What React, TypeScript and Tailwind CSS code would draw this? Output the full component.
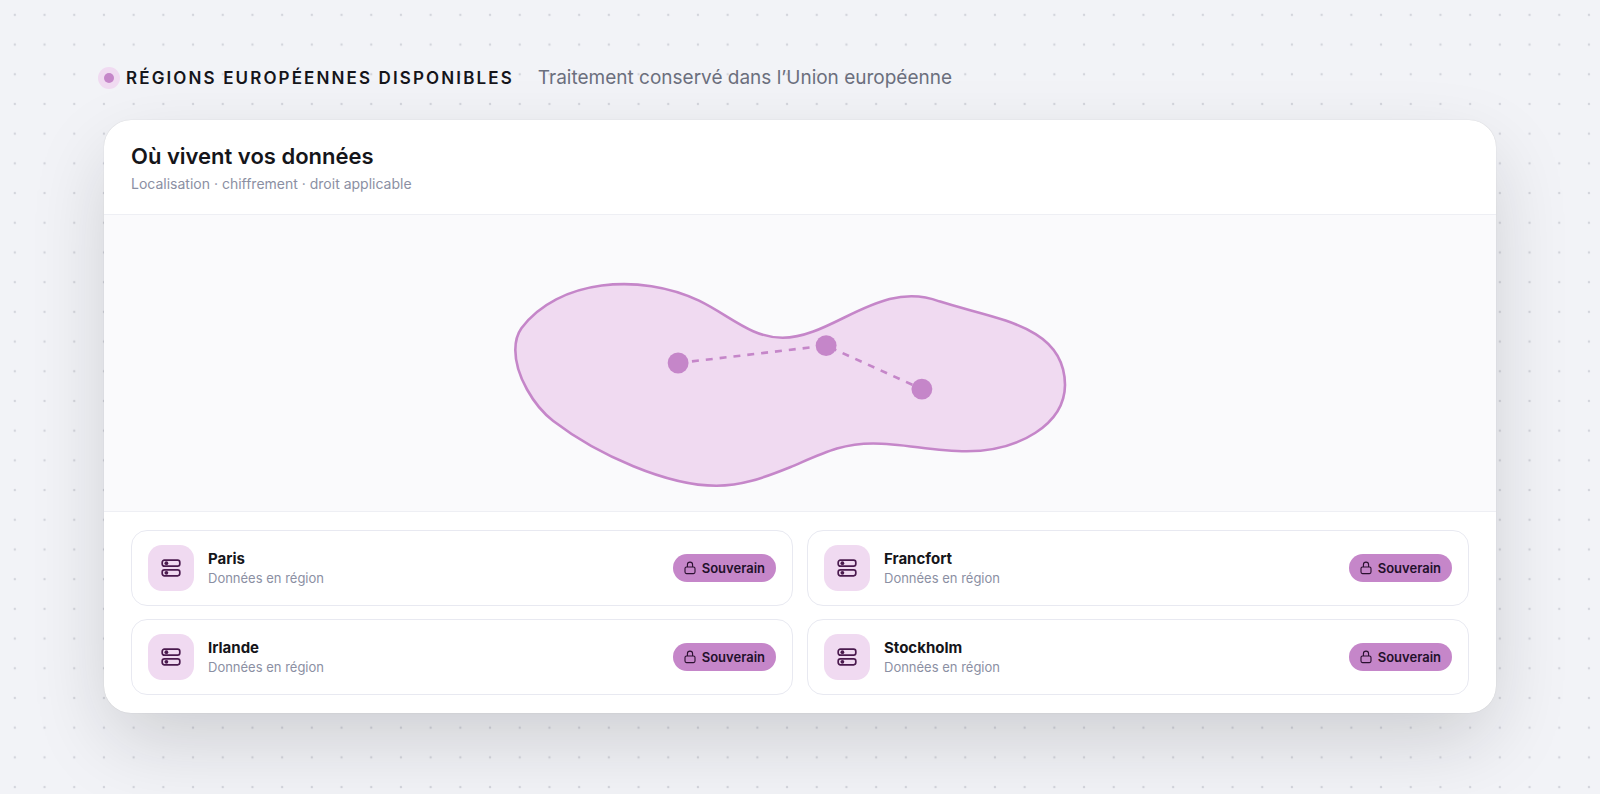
const regions = [
  { id: "paris", name: "Paris" },
  { id: "francfort", name: "Francfort" },
  { id: "irlande", name: "Irlande" },
  { id: "stockholm", name: "Stockholm" },
];

const DotGrid = () => (
  <svg className="absolute inset-0 h-full w-full" aria-hidden="true">
    <defs>
      <pattern id="dots" width="22" height="22" patternUnits="userSpaceOnUse" patternTransform="scale(1.35)">
        <circle cx="11" cy="11" r="0.9" fill="#d3d5dc" />
      </pattern>
    </defs>
    <rect width="100%" height="100%" fill="url(#dots)" />
  </svg>
);

const ServerIcon = () => (
  <svg width="20" height="18" viewBox="0 0 20 18" fill="none" stroke="#4a1a4e" strokeWidth="1.7" aria-hidden="true">
    <rect x="1.2" y="1.2" width="17.6" height="6" rx="2.2" />
    <rect x="1.2" y="10.8" width="17.6" height="6" rx="2.2" />
    <circle cx="5.4" cy="4.2" r="1.9" fill="#4a1a4e" stroke="none" />
    <circle cx="5.4" cy="13.8" r="1.9" fill="#4a1a4e" stroke="none" />
  </svg>
);

const LockIcon = () => (
  <svg width="12" height="14" viewBox="0 0 12 14" fill="none" stroke="#2a1030" strokeWidth="1.1" aria-hidden="true">
    <rect x="1" y="6" width="10" height="6.6" rx="1.5" />
    <path d="M3.4 6V3.7a2.6 2.6 0 0 1 5.2 0V6" />
  </svg>
);

const RegionMap = () => (
  <svg className="block h-74 w-full" viewBox="0 0 400 170" fill="none" role="img" aria-label="Régions européennes">
    <path
      d="M40 65C61 37 108 33 142 49.2C160 58 172 70.5 190 70.5C219 70.5 246 36.5 280 49.6C312 60 352 63 352.2 97.6C352 120 326 135.7 295.7 135.7C276 135.7 260 131.2 242 131.2C224 131.2 214 136.5 194.3 144.9C178 151.5 166 155.5 152 155.5C124 155.5 84 138 58.3 118.3C47 109.6 36.5 92 36.5 77.5C36.5 72 37.5 68.5 40 65Z"
      fill="#f0daf1"
      stroke="#c586c9"
      strokeWidth="1.5"
    />
    <path d="M130 85L215 75L270 100" stroke="#c586c9" strokeWidth="1.5" strokeDasharray="4 4" />
    <circle cx="130" cy="85" r="6" fill="#c586c9" />
    <circle cx="215" cy="75" r="6" fill="#c586c9" />
    <circle cx="270" cy="100" r="6" fill="#c586c9" />
  </svg>
);

const RegionCard = ({ name }: { name: string }) => (
  <li className="flex items-center gap-3.5 rounded-2xl border border-[#e8e9f1] bg-white px-4 py-3.5">
    <div className="flex size-[46px] shrink-0 items-center justify-center rounded-[14px] bg-[#f0daf1]">
      <ServerIcon />
    </div>
    <div className="min-w-0 flex-1">
      <p className="text-[15px] leading-5 font-bold text-[#15151a]">{name}</p>
      <p className="text-[13px] leading-[18px] text-[#8b8fa3]">Données en région</p>
    </div>
    <span className="flex items-center gap-1.5 rounded-full bg-[#c586c9] px-[11px] py-1 text-[13px] leading-5 font-semibold text-[#22102a]">
      <LockIcon />
      Souverain
    </span>
  </li>
);

const App = () => {
  return (
    <div className="relative min-h-screen bg-[#f2f3f7] font-['Inter','Liberation_Sans',sans-serif]">
      <DotGrid />
      <main className="relative px-[104px] pt-[62px] pb-20">
        <div className="mb-[26px] flex items-center">
          <span className="mr-3 size-2.5 shrink-0 rounded-full bg-[#c586c9] ring-[6px] ring-[#f0daf1]" />
          <h1 className="mr-6 text-[17px] leading-8 font-semibold tracking-[0.125em] text-[#15151a] uppercase">
            Régions européennes disponibles
          </h1>
          <p className="text-[19px] leading-8 text-[#6b6f7d]">Traitement conservé dans l’Union européenne</p>
        </div>

        <section className="overflow-hidden rounded-[27px] bg-white shadow-[0_30px_80px_-8px_rgba(20,22,26,0.18),0_0_1px_rgba(20,22,26,0.2)]">
          <header className="border-b border-[#eeeff4] px-[27px] pt-5 pb-5">
            <h2 className="text-[22px] leading-[33px] font-semibold text-[#15151a]">Où vivent vos données</h2>
            <p className="text-[14px] leading-[21px] text-[#8b8fa3]">Localisation · chiffrement · droit applicable</p>
          </header>

          <div className="border-b border-[#eeeff4] bg-[#fafafc]">
            <RegionMap />
          </div>

          <ul className="grid grid-cols-2 gap-x-3.5 gap-y-[13px] px-[27px] py-[18px]">
            {regions.map((region) => (
              <RegionCard key={region.id} name={region.name} />
            ))}
          </ul>
        </section>
      </main>
    </div>
  );
};

export default App;
